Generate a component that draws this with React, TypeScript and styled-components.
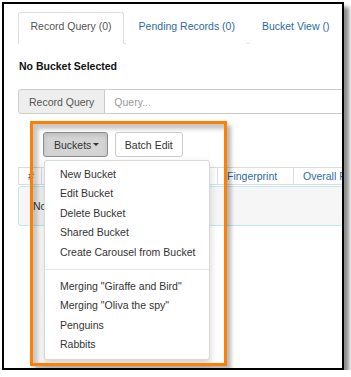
import React from "react";
import styled, { createGlobalStyle } from "styled-components";

const GlobalStyle = createGlobalStyle`
  html, body {
    margin: 0;
    padding: 0;
    background: #ffffff;
  }
  body {
    font-family: "Liberation Sans", Arial, sans-serif;
    font-size: 10.5px;
    color: #333333;
  }
  * { box-sizing: border-box; }
`;

const Frame = styled.div`
  position: relative;
  margin: 2px 0 0 2px;
  width: 342px;
  height: 368px;
  border: 2px solid #000000;
  background: #ffffff;
  box-shadow: 5px 5px 4px rgba(0, 0, 0, 0.45);
  overflow: hidden;
  padding: 8px 0 0 14px;
`;

const Nav = styled.div`
  display: flex;
  height: 32px;
  border-bottom: 1px solid #dddddd;
`;

const Tab = styled.div<{ $active?: boolean }>`
  height: 32px;
  margin-right: 2px;
  padding: 6px 11.5px 0;
  line-height: 15px;
  white-space: nowrap;
  border: 1px solid ${(p) => (p.$active ? "#dddddd" : "transparent")};
  border-bottom-color: transparent;
  border-radius: 3px 3px 0 0;
  background: #ffffff;
  color: ${(p) => (p.$active ? "#555555" : "#2c6aa3")};
`;

const Heading = styled.div`
  margin-top: 14.5px;
  padding-left: 1px;
  line-height: 15px;
  font-weight: bold;
  color: #111111;
`;

const InputGroup = styled.div`
  display: flex;
  margin-top: 15.5px;
  width: 360px;
  height: 25px;
`;

const Addon = styled.div`
  display: flex;
  align-items: center;
  padding: 0 10px;
  background: #eeeeee;
  border: 1px solid #cccccc;
  border-radius: 3px 0 0 3px;
  color: #555555;
  white-space: nowrap;
`;

const QueryInput = styled.div`
  flex: 1;
  display: flex;
  align-items: center;
  padding: 0 9px;
  border: 1px solid #cccccc;
  border-left: none;
  color: #999999;
`;

const Toolbar = styled.div`
  display: flex;
  gap: 7px;
  margin-top: 18px;
  padding-left: 25px;
`;

const DropdownWrap = styled.div`
  position: relative;
  z-index: 2;
`;

const Btn = styled.div<{ $active?: boolean }>`
  display: flex;
  align-items: center;
  height: 25px;
  padding: 0 ${(p) => (p.$active ? "8px 0 10px" : "9px")};
  border: 1px solid ${(p) => (p.$active ? "#8c8c8c" : "#cccccc")};
  border-radius: 3px;
  background: ${(p) => (p.$active ? "#d4d4d4" : "#ffffff")};
  box-shadow: ${(p) => (p.$active ? "inset 0 2px 4px rgba(0,0,0,0.125)" : "none")};
  color: #333333;
  white-space: nowrap;
`;

const Caret = styled.span`
  display: inline-block;
  width: 0;
  height: 0;
  margin-left: 1.5px;
  border-top: 3px solid #333333;
  border-left: 3px solid transparent;
  border-right: 3px solid transparent;
`;

const Menu = styled.div`
  position: absolute;
  top: calc(100% + 3px);
  left: 1px;
  width: 166px;
  padding: 3.75px 0;
  background: #ffffff;
  border: 1px solid rgba(0, 0, 0, 0.15);
  border-radius: 3px;
  box-shadow: 0 4.5px 9px rgba(0, 0, 0, 0.175);
`;

const MenuItem = styled.div`
  padding: 0 15px;
  line-height: 19.5px;
  color: #333333;
  white-space: nowrap;
`;

const Divider = styled.div`
  height: 1px;
  margin: 6.75px 0;
  background: #e5e5e5;
`;

const HeaderRow = styled.div`
  display: flex;
  margin-top: 10px;
  width: 420px;
  height: 18px;
  border-top: 1px solid #dddddd;
  border-bottom: 1px solid #dddddd;
`;

const HeadCell = styled.div<{ $w: number; $link?: boolean }>`
  flex: 0 0 ${(p) => p.$w}px;
  padding-left: 9px;
  line-height: 16px;
  border-left: 1px solid #dddddd;
  color: ${(p) => (p.$link ? "#2c6aa3" : "#333333")};
  white-space: nowrap;
`;

const EmptyBox = styled.div`
  display: flex;
  align-items: center;
  margin-top: 1px;
  width: 420px;
  height: 40px;
  padding-left: 14px;
  border: 1px solid #bce8f1;
  border-radius: 3px;
  background: #f6f6f6;
  color: #333333;
`;

const Highlight = styled.div`
  position: absolute;
  left: 26px;
  top: 117px;
  width: 197px;
  height: 245px;
  border: 3px solid #ff8000;
  box-shadow: 4px 4px 4px rgba(0, 0, 0, 0.28), inset 5px 5px 4px rgba(0, 0, 0, 0.22);
  pointer-events: none;
  z-index: 3;
`;

const bucketActions = [
  "New Bucket",
  "Edit Bucket",
  "Delete Bucket",
  "Shared Bucket",
  "Create Carousel from Bucket",
];

const buckets = [
  'Merging "Giraffe and Bird"',
  'Merging "Oliva the spy"',
  "Penguins",
  "Rabbits",
];

export default function App() {
  return (
    <>
      <GlobalStyle />
      <Frame>
        <Nav>
          <Tab $active>Record Query (0)</Tab>
          <Tab>Pending Records (0)</Tab>
          <Tab>Bucket View ()</Tab>
        </Nav>
        <Heading>No Bucket Selected</Heading>
        <InputGroup>
          <Addon>Record Query</Addon>
          <QueryInput>Query...</QueryInput>
        </InputGroup>
        <Toolbar>
          <DropdownWrap>
            <Btn $active>
              Buckets
              <Caret />
            </Btn>
            <Menu>
              {bucketActions.map((a) => (
                <MenuItem key={a}>{a}</MenuItem>
              ))}
              <Divider />
              {buckets.map((b) => (
                <MenuItem key={b}>{b}</MenuItem>
              ))}
            </Menu>
          </DropdownWrap>
          <Btn>Batch Edit</Btn>
        </Toolbar>
        <HeaderRow>
          <HeadCell $w={23}>#</HeadCell>
          <HeadCell $w={176} $link />
          <HeadCell $w={76} $link>
            Fingerprint
          </HeadCell>
          <HeadCell $w={140} $link>
            Overall Record Quality
          </HeadCell>
        </HeaderRow>
        <EmptyBox>No Items To Display</EmptyBox>
        <Highlight />
      </Frame>
    </>
  );
}
